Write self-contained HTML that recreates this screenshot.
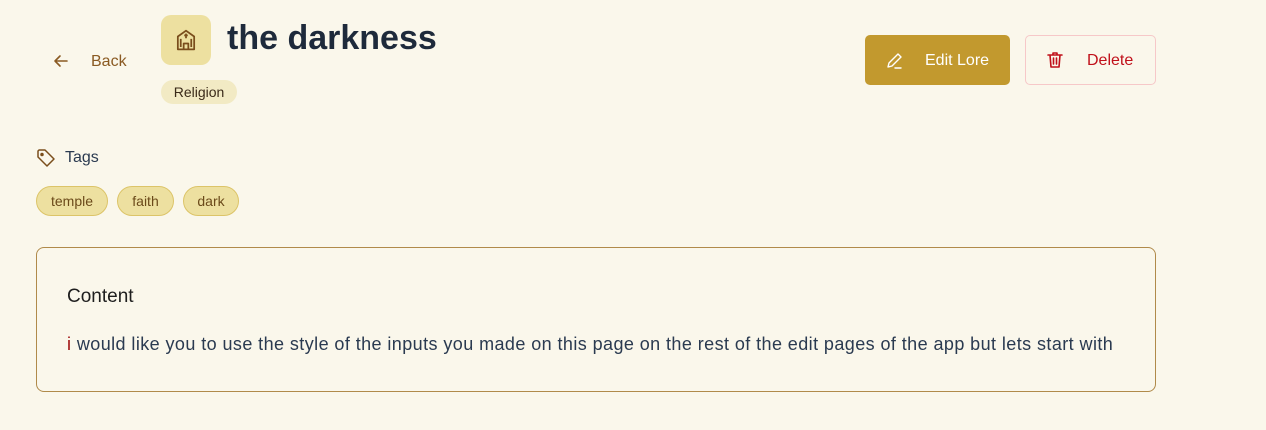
<!DOCTYPE html>
<html><head><style>
body{margin:0;background:#faf7eb;font-family:"Liberation Sans",sans-serif;width:1266px;height:430px;position:relative;overflow:hidden}
.a{position:absolute}
.pill{position:absolute;top:186px;height:28px;border:1px solid #dcc468;background:#ede0a0;border-radius:15px;color:#6b4a1a;font-size:14px;line-height:28px;text-align:center}
</style></head><body>
<svg class="a" style="left:52px;top:52px" width="18" height="18" viewBox="0 0 18 18" fill="none" stroke="#8a5a22" stroke-width="1.6" stroke-linecap="round" stroke-linejoin="round"><path d="M15 9H3M8 4L3 9l5 5"/></svg>
<div class="a" style="left:91px;top:53px;font-size:16px;color:#8a5a22">Back</div>
<div class="a" style="left:161px;top:15px;width:50px;height:50px;border-radius:10px;background:#ede0a0"></div>
<svg class="a" style="left:172px;top:26px" width="28" height="28" viewBox="0 0 24 24" fill="none" stroke="#7a4e1c" stroke-width="1.5" stroke-linejoin="round"><path d="M5 20V9l7-5 7 5v11H5zM10 20v-5h4v5M12 6.5v4M10.5 8h3M7.5 11v7M16.5 11v7"/></svg>
<div class="a" style="left:227px;top:19px;font-size:34px;font-weight:bold;color:#1e2a3b">the darkness</div>
<div class="a" style="left:161px;top:80px;width:76px;height:24px;border-radius:12px;background:#f2eac4;color:#3a2a18;font-size:14px;line-height:24px;text-align:center">Religion</div>
<div class="a" style="left:865px;top:35px;width:145px;height:50px;border-radius:5px;background:#c2992e"></div>
<svg class="a" style="left:885px;top:51px" width="20" height="20" viewBox="0 0 20 20" fill="none" stroke="#fff" stroke-width="1.4" stroke-linecap="round" stroke-linejoin="round"><path d="M3 16l1-4 9-9 3 3-9 9-4 1zM10 17h6"/></svg>
<div class="a" style="left:925px;top:52px;font-size:16px;color:#fff">Edit Lore</div>
<div class="a" style="left:1025px;top:35px;width:129px;height:48px;border-radius:5px;border:1px solid #f6c8c8"></div>
<svg class="a" style="left:1045px;top:50px" width="20" height="20" viewBox="0 0 20 20" fill="none" stroke="#c0101a" stroke-width="1.6" stroke-linecap="round" stroke-linejoin="round"><path d="M3 5h14M8 5V3h4v2M5 5l1 12h8l1-12M8.5 8v6M11.5 8v6"/></svg>
<div class="a" style="left:1087px;top:52px;font-size:16px;color:#c0101a">Delete</div>
<svg class="a" style="left:36px;top:148px" width="20" height="20" viewBox="0 0 20 20" fill="none" stroke="#7a4e1c" stroke-width="1.5" stroke-linejoin="round"><path d="M2 3v6l9 9 7-7-9-9H3z"/><circle cx="6" cy="6.5" r="1" fill="#7a4e1c"/></svg>
<div class="a" style="left:65px;top:149px;font-size:16px;color:#2a3a50">Tags</div>
<div class="pill" style="left:36px;width:70px">temple</div>
<div class="pill" style="left:117px;width:55px">faith</div>
<div class="pill" style="left:183px;width:54px">dark</div>
<div class="a" style="left:36px;top:247px;width:1118px;height:143px;border:1px solid #b08a4a;border-radius:8px"></div>
<div class="a" style="left:67px;top:286px;font-size:19px;color:#1e1e1e">Content</div>
<div class="a" style="left:67px;top:334px;font-size:18px;letter-spacing:0.42px;white-space:nowrap;color:#2a3a50"><span style="color:#a01010">i</span> would like you to use the style of the inputs you made on this page on the rest of the edit pages of the app but lets start with</div>
</body></html>
